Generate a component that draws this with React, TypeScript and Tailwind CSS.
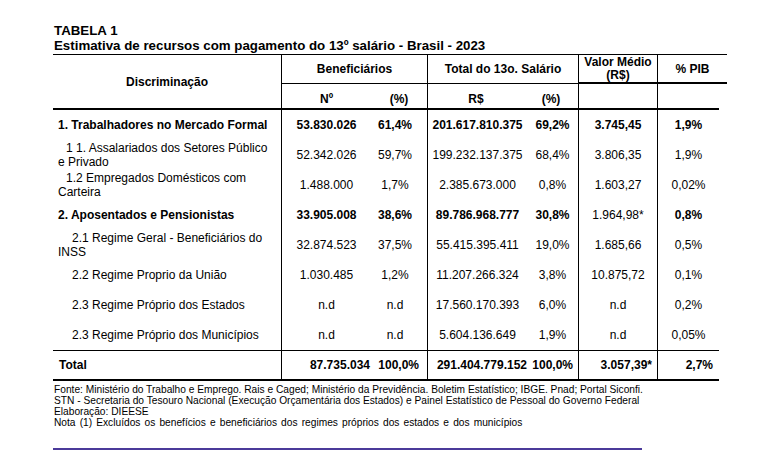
import React from "react";

type Row = {
  label: React.ReactNode;
  indent: string;
  bold?: boolean;
  v: string[];
  boldMask?: boolean[];
};

const rows: Row[] = [
  {
    label: "1. Trabalhadores no Mercado Formal",
    indent: "",
    bold: true,
    v: ["53.830.026", "61,4%", "201.617.810.375", "69,2%", "3.745,45", "1,9%"],
  },
  {
    label: (
      <>
        <span className="pl-[8px]">1 1. Assalariados dos Setores Público</span>
        <br />e Privado
      </>
    ),
    indent: "",
    v: ["52.342.026", "59,7%", "199.232.137.375", "68,4%", "3.806,35", "1,9%"],
  },
  {
    label: (
      <>
        <span className="pl-[8px]">1.2 Empregados Domésticos com</span>
        <br />Carteira
      </>
    ),
    indent: "",
    v: ["1.488.000", "1,7%", "2.385.673.000", "0,8%", "1.603,27", "0,02%"],
  },
  {
    label: "2. Aposentados e Pensionistas",
    indent: "",
    bold: true,
    v: ["33.905.008", "38,6%", "89.786.968.777", "30,8%", "1.964,98*", "0,8%"],
    boldMask: [true, true, true, true, false, true],
  },
  {
    label: (
      <>
        <span className="pl-[14px]">2.1 Regime Geral - Beneficiários do</span>
        <br />INSS
      </>
    ),
    indent: "",
    v: ["32.874.523", "37,5%", "55.415.395.411", "19,0%", "1.685,66", "0,5%"],
  },
  {
    label: "2.2 Regime Proprio da União",
    indent: "pl-[14px]",
    v: ["1.030.485", "1,2%", "11.207.266.324", "3,8%", "10.875,72", "0,1%"],
  },
  {
    label: "2.3 Regime Próprio dos Estados",
    indent: "pl-[14px]",
    v: ["n.d", "n.d", "17.560.170.393", "6,0%", "n.d", "0,2%"],
  },
  {
    label: "2.3 Regime Próprio dos Municípios",
    indent: "pl-[14px]",
    v: ["n.d", "n.d", "5.604.136.649", "1,9%", "n.d", "0,05%"],
  },
];

function BodyRow({ r }: { r: Row }) {
  const b = (i: number) =>
    (r.boldMask ? r.boldMask[i] : r.bold) ? "font-bold" : "font-normal";
  return (
    <div className="flex h-[30px]">
      <div
        className={`w-[228px] pl-[5px] flex items-center leading-[14px] ${
          r.bold ? "font-bold" : ""
        }`}
      >
        <div className={r.indent}>{r.label}</div>
      </div>
      <div className={`w-[90px] border-l border-black flex items-center justify-center ${b(0)}`}>
        {r.v[0]}
      </div>
      <div className={`w-[56px] pr-[8px] flex items-center justify-center ${b(1)}`}>{r.v[1]}</div>
      <div className={`w-[100px] border-l border-black flex items-center justify-center ${b(2)}`}>
        {r.v[2]}
      </div>
      <div className={`w-[51px] flex items-center justify-center ${b(3)}`}>{r.v[3]}</div>
      <div className={`w-[79px] border-l border-black flex items-center justify-center ${b(4)}`}>
        {r.v[4]}
      </div>
      <div className={`w-[62px] border-l border-black flex items-center justify-center ${b(5)}`}>
        {r.v[5]}
      </div>
    </div>
  );
}

export default function App() {
  return (
    <div className="w-[760px] h-[451px] bg-white overflow-hidden text-black font-['Liberation_Sans',Arial,sans-serif] pl-[53px] pt-[23px]">
      <div className="text-[13.3px] leading-[15px] font-bold pl-[1px]">
        <div>TABELA 1</div>
        <div>Estimativa de recursos com pagamento do 13º salário - Brasil - 2023</div>
      </div>

      {/* Header */}
      <div className="mt-[1px] w-[674px] h-[54px] border-t border-black flex text-[12px] font-bold">
        <div className="w-[228px] flex items-center justify-center">Discriminação</div>
        <div className="w-[146px] border-l border-black flex flex-col">
          <div className="h-[29px] border-b border-black flex items-center justify-center">
            Beneficiários
          </div>
          <div className="flex-1 flex pt-[6px]">
            <div className="w-[89px] flex items-center justify-center">Nº</div>
            <div className="w-[56px] flex items-center justify-center">(%)</div>
          </div>
        </div>
        <div className="w-[151px] border-l border-black flex flex-col">
          <div className="h-[29px] border-b border-black flex items-center justify-center">
            Total do 13o. Salário
          </div>
          <div className="flex-1 flex pt-[6px]">
            <div className="w-[96px] flex items-center justify-center">R$</div>
            <div className="w-[54px] flex items-center justify-center">(%)</div>
          </div>
        </div>
        <div className="w-[79px] border-l border-black flex flex-col">
          <div className="h-[29px] border-b-2 border-black flex flex-col items-center justify-center leading-[13px] text-center">
            <div>Valor Médio</div>
            <div>(R$)</div>
          </div>
        </div>
        <div className="w-[70px] border-l border-black flex flex-col">
          <div className="h-[29px] border-b-2 border-black flex items-center justify-center">
            % PIB
          </div>
        </div>
      </div>

      {/* Body */}
      <div className="w-[666px] border-t-2 border-black text-[12px]">
        {rows.map((r, i) => (
          <BodyRow key={i} r={r} />
        ))}
        <div className="flex h-[31px] border-t border-b-2 border-black font-bold">
          <div className="w-[228px] pl-[6px] flex items-center">Total</div>
          <div className="w-[90px] border-l border-black flex items-center justify-end pr-[1px]">
            87.735.034
          </div>
          <div className="w-[56px] flex items-center justify-end pr-[8px]">100,0%</div>
          <div className="w-[100px] border-l border-black flex items-center justify-end">
            291.404.779.152
          </div>
          <div className="w-[51px] flex items-center justify-end pr-[5px]">100,0%</div>
          <div className="w-[79px] border-l border-black flex items-center justify-end pr-[5px]">
            3.057,39*
          </div>
          <div className="w-[62px] border-l border-black flex items-center justify-end pr-[6px]">
            2,7%
          </div>
        </div>
      </div>

      {/* Footer */}
      <div className="pt-[3px] text-[10.2px] leading-[11px] whitespace-nowrap pl-[1px]">
        <div>
          Fonte: Ministério do Trabalho e Emprego. Rais e Caged; Ministério da Previdência. Boletim
          Estatístico; IBGE. Pnad; Portal Siconfi.
        </div>
        <div>
          STN - Secretaria do Tesouro Nacional (Execução Orçamentária dos Estados) e Painel
          Estatístico de Pessoal do Governo Federal
        </div>
        <div>Elaboração: DIEESE</div>
        <div className="[word-spacing:1.3px]">
          Nota (1) Excluídos os benefícios e beneficiários dos regimes próprios dos estados e dos
          municípios
        </div>
      </div>
      <div className="mt-[20px] w-[589px] h-[2px] bg-[#4b3a9a]" />
    </div>
  );
}
